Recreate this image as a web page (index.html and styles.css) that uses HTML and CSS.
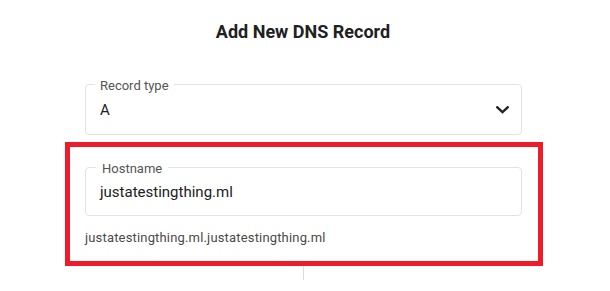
FILE: index.html
```html
<!DOCTYPE html>
<html lang="en">
<head>
<meta charset="utf-8">
<title>Add New DNS Record</title>
<link rel="stylesheet" href="styles.css">
</head>
<body>
<div class="page">
  <h1 class="title">Add New DNS Record</h1>
  <div class="field field-select">
    <span class="field-label">Record type</span>
    <span class="field-value">A</span>
    <svg class="chevron" width="13" height="8" viewBox="0 0 13 8" aria-hidden="true">
      <path d="M1.3 1.3 L6.5 6.2 L11.7 1.3" fill="none" stroke="#222" stroke-width="2.4" stroke-linecap="square"/>
    </svg>
  </div>
  <div class="highlight">
    <div class="field field-host">
      <span class="field-label">Hostname</span>
      <span class="field-value">justatestingthing.ml</span>
    </div>
    <p class="helper">justatestingthing.ml.justatestingthing.ml</p>
  </div>
  <div class="divider"></div>
</div>
</body>
</html>
```
FILE: styles.css
```css
html, body {
  margin: 0;
  padding: 0;
  background: #fff;
}
body {
  font-family: Roboto, "Liberation Sans", Arial, sans-serif;
  color: #212121;
}
.page {
  width: 610px;
  padding-top: 22px;
}
.title {
  margin: 0;
  text-align: center;
  font-size: 18px;
  line-height: 20px;
  font-weight: 700;
  color: #212121;
  padding-right: 4px;
}
.field {
  position: relative;
  box-sizing: border-box;
  width: 437px;
  border: 1px solid #e3e3e3;
  border-radius: 4px;
  display: flex;
  align-items: center;
  padding: 0 12px 0 14px;
}
.field-select {
  margin: 42px 0 0 85px;
  height: 51px;
}
.field-host {
  height: 49px;
}
.field-label {
  position: absolute;
  top: -7px;
  left: 9px;
  padding: 0 5px;
  background: #fff;
  font-size: 13px;
  line-height: 16px;
  color: #555;
}
.field-host .field-label {
  left: 10px;
  padding: 0 6px;
}
.field-value {
  font-size: 15px;
  line-height: 18px;
  color: #212121;
  flex: 1;
}
.chevron {
  display: block;
}
.highlight {
  box-sizing: border-box;
  margin: 7px 0 0 65px;
  width: 478px;
  height: 124px;
  border: 5px solid #ee1c2a;
  padding: 20px 16px 0 15px;
  position: relative;
  z-index: 1;
}
.helper {
  margin: 14px 0 0 0;
  font-size: 13px;
  line-height: 15px;
  letter-spacing: 0.17px;
  color: #4a4a4a;
}
.divider {
  margin: 0 0 0 303px;
  width: 1px;
  height: 14px;
  background: #dcdcdc;
}
```
